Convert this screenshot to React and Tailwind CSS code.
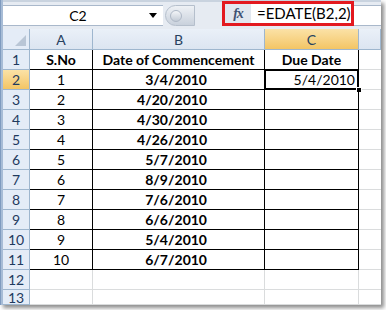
const cols = ['A', 'B', 'C', 'D'];

const data = [
  ['S.No', 'Date of Commencement', 'Due Date'],
  ['1', '3/4/2010', '5/4/2010'],
  ['2', '4/20/2010', ''],
  ['3', '4/30/2010', ''],
  ['4', '4/26/2010', ''],
  ['5', '5/7/2010', ''],
  ['6', '8/9/2010', ''],
  ['7', '7/6/2010', ''],
  ['8', '6/6/2010', ''],
  ['9', '5/4/2010', ''],
  ['10', '6/7/2010', ''],
];

function FormulaBar() {
  return (
    <div className="flex h-[29px] bg-[#e6ebf2] border-t-[2px] border-[#c9d3df]">
      {/* Name box */}
      <div className="mt-[3px] h-[21px] w-[160px] bg-white border-y border-[#a9b8cb] flex items-center">
        <span className="flex-1 text-center pl-[4px] text-[14px] text-black">C2</span>
        <span className="w-0 h-0 mr-[6px] border-x-[4px] border-x-transparent border-t-[5px] border-t-black" />
      </div>
      {/* splitter */}
      <div className="mt-[3px] ml-[2px] h-[21px] w-[30px] rounded-l-full bg-gradient-to-b from-[#eef1f5] to-[#c9d1dc] border border-[#b5bfcc] flex items-center pl-[4px]">
        <div className="w-[12px] h-[12px] rounded-full bg-gradient-to-b from-[#f4f6f9] to-[#c3cbd6] border border-[#aeb8c6]" />
      </div>
      <div className="w-[27px]" />
      {/* formula */}
      <div className="h-[25px] w-[132px] -mt-[1px] border-[3px] border-[#e3191f] flex bg-white">
        <div className="w-[26px] bg-[#e1e7ef] flex items-center justify-center">
          <span className="italic font-bold text-[14px] text-[#3d5273] font-['Liberation_Serif',serif] tracking-[-1px]">fx</span>
        </div>
        <div className="flex-1 flex items-center pl-[6px] text-[15px] text-black">=EDATE(B2,2)</div>
      </div>
      <div className="flex-1 mt-[3px] h-[21px] bg-white border-y border-[#a9b8cb]" />
    </div>
  );
}

export default function App() {
  const headerBorder = 'border-r border-b border-[#9eb6ce]';
  return (
    <div className="w-[386px] h-[310px] bg-white font-['Lato',sans-serif]">
      <div className="w-[381px] h-[305px] flex overflow-hidden shadow-[3px_3px_4px_rgba(0,0,0,0.45)]">
        <div className="w-[3px] bg-[#a7bcd6] border-l border-[#7f9bbf]" />
        <div className="flex-1 flex flex-col">
          <FormulaBar />
          <div className="grid grid-cols-[27px_63px_172px_94px_22px] grid-rows-[21px_repeat(12,20px)_15px] text-[14px]">
            {/* corner */}
            <div className={`relative bg-[#e4ecf7] ${headerBorder}`}>
              <div className="absolute right-[3px] bottom-[3px] w-0 h-0 border-l-[11px] border-l-transparent border-b-[11px] border-b-[#b9c6d6]" />
            </div>
            {cols.map((c) => (
              <div
                key={c}
                className={`flex items-center justify-center text-[#27415f] ${headerBorder} ${
                  c === 'C'
                    ? 'bg-gradient-to-b from-[#fbe2a6] to-[#f3c564]'
                    : 'bg-gradient-to-b from-[#eaf0f8] to-[#dce5f1]'
                }`}
              >
                {c === 'D' ? '' : c}
              </div>
            ))}
            {Array.from({ length: 13 }).map((_, i) => {
              const r = i + 1;
              const row = data[i] || ['', '', ''];
              const inTable = r <= 11;
              return [
                <div
                  key={`h${r}`}
                  className={`flex items-center justify-center text-[#1f3a5e] ${headerBorder} ${
                    r === 2 ? 'bg-gradient-to-b from-[#fbe2a6] to-[#f3c564]' : 'bg-[#e4ecf7]'
                  }`}
                >
                  {r}
                </div>,
                <div
                  key={`a${r}`}
                  className={`flex items-center justify-center border-r border-b ${
                    inTable ? 'border-black' : 'border-[#dadcdd]'
                  } ${r === 1 ? 'font-bold' : ''}`}
                >
                  {row[0]}
                </div>,
                <div
                  key={`b${r}`}
                  className={`flex items-center border-r border-b font-bold ${
                    inTable ? 'border-black' : 'border-[#dadcdd]'
                  } ${r === 1 ? 'justify-center' : 'justify-end pr-[57px]'}`}
                >
                  {row[1]}
                </div>,
                <div
                  key={`c${r}`}
                  className={`relative flex items-center border-r border-b ${
                    inTable ? 'border-black' : 'border-[#dadcdd]'
                  } ${r === 1 ? 'justify-center font-bold' : 'justify-end pr-[3px]'}`}
                >
                  {row[2]}
                  {r === 2 && (
                    <>
                      <div className="absolute -left-[1px] -top-[1px] -right-[1px] -bottom-[1px] border-2 border-black" />
                      <div className="absolute -right-[4px] -bottom-[4px] w-[6px] h-[6px] bg-black border border-white" />
                    </>
                  )}
                </div>,
                <div key={`d${r}`} className="border-b border-[#dadcdd]" />,
              ];
            })}
          </div>
        </div>
      </div>
    </div>
  );
}
